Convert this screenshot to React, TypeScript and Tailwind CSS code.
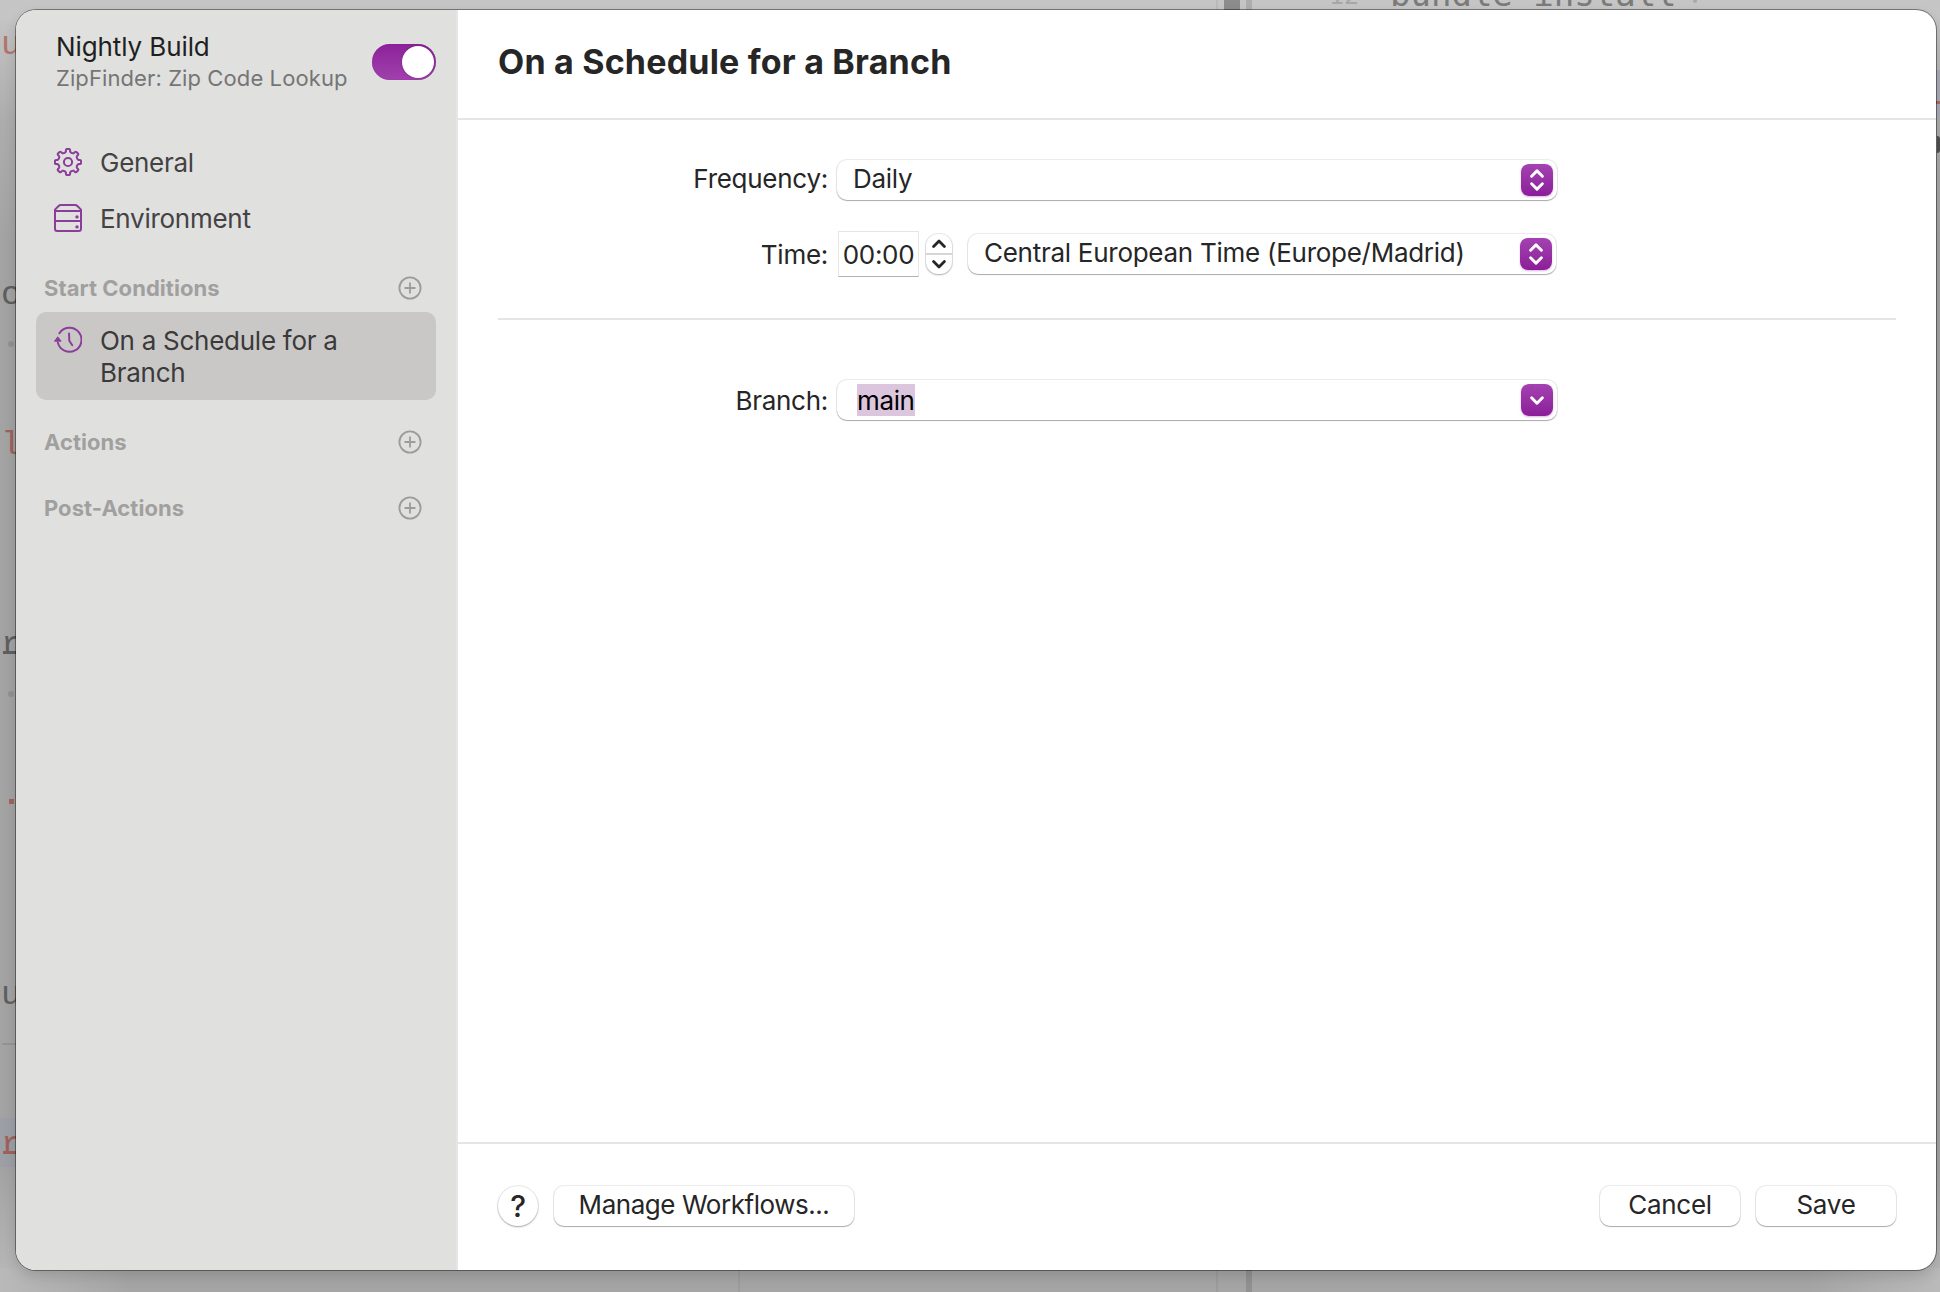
import type { ReactNode } from "react";

function gearPath() {
  const pt = (r: number, deg: number) => {
    const a = ((deg - 90) * Math.PI) / 180;
    return `${(14 + r * Math.cos(a)).toFixed(2)} ${(14 + r * Math.sin(a)).toFixed(2)}`;
  };
  let d = "";
  for (let i = 0; i < 8; i++) {
    const c = i * 45;
    d += `${i === 0 ? "M" : "L"}${pt(10.6, c - 11.5)} L${pt(12.2, c - 10)} Q${pt(13.1, c - 9)} ${pt(13.1, c - 5)} L${pt(13.1, c + 5)} Q${pt(13.1, c + 9)} ${pt(12.2, c + 10)} L${pt(10.6, c + 11.5)} Q${pt(9, c + 22.5)} ${pt(10.6, c + 33.5)} `;
  }
  return d + "Z";
}

const GEAR = gearPath();

function GearIcon() {
  return (
    <svg viewBox="0 0 28 28" className="size-7" fill="none" stroke="#8b3d9a" strokeWidth="2" strokeLinejoin="round">
      <path d={GEAR} />
      <circle cx="14" cy="14" r="4.1" />
    </svg>
  );
}

function ServerIcon() {
  return (
    <svg viewBox="0 0 28 28" className="size-7" fill="none" stroke="#8b3d9a" strokeWidth="2" strokeLinejoin="round">
      <path d="M1 7V24.8Q1 27 3.2 27H24.8Q27 27 27 24.8V7L27 5.6L23.4 2Q22.4 1 21 1H7Q5.6 1 4.6 2L1 5.6Z" />
      <path d="M1 7H27M1 17H27" />
      <circle cx="23" cy="12.9" r="1.7" fill="#8b3d9a" stroke="none" />
      <circle cx="23" cy="22.9" r="1.7" fill="#8b3d9a" stroke="none" />
    </svg>
  );
}

function HistoryIcon() {
  return (
    <svg viewBox="0 0 28 28" className="size-7" fill="none" stroke="#8b3d9a" strokeWidth="2" strokeLinecap="round" strokeLinejoin="round">
      <path d="M3.8 16.4A12 12 0 1 0 5.4 7.3" />
      <path d="M15 7.6L15.3 14.8L18.3 19.2" />
      <path d="M0.9 15.1H6.7L3.8 11.4Z" fill="#8b3d9a" strokeWidth="1.5" />
    </svg>
  );
}

function PlusCircle() {
  return (
    <svg viewBox="0 0 24 24" className="size-6" fill="none" stroke="#9c9c9b" strokeWidth="1.8" strokeLinecap="round">
      <circle cx="12" cy="12" r="10.6" />
      <path d="M12 7.2V16.8M7.2 12H16.8" />
    </svg>
  );
}

function Knob({ single = false }: { single?: boolean }) {
  return (
    <div className="size-8 shrink-0 rounded-lg bg-linear-to-b from-[#a342b0] to-[#8c1d99] shadow-[0_1px_2px_rgba(150,40,165,0.35)]">
      <svg viewBox="0 0 32 32" className="size-8" fill="none" stroke="#fff" strokeWidth="2.9" strokeLinecap="round" strokeLinejoin="round">
        {single ? (
          <path d="M10.6 13.7L16 19.3L21.4 13.7" />
        ) : (
          <path d="M10.6 12.3L16 6.9L21.4 12.3M10.6 19.7L16 25.1L21.4 19.7" />
        )}
      </svg>
    </div>
  );
}

function Popup({ children, className }: { children: ReactNode; className: string }) {
  return (
    <div className={`flex h-10 items-center justify-between rounded-[10px] bg-white pr-1 pl-4 shadow-[0_0_0_1px_rgba(0,0,0,0.08),0_1px_1px_rgba(0,0,0,0.28)] ${className}`}>
      {children}
    </div>
  );
}

function Button({ children, className }: { children: ReactNode; className: string }) {
  return (
    <button className={`flex h-10 items-center justify-center rounded-[10px] bg-white pb-0.5 shadow-[0_0_0_1px_rgba(0,0,0,0.08),0_1px_1px_rgba(0,0,0,0.28)] ${className}`}>
      {children}
    </button>
  );
}

function Section({ title, className }: { title: string; className: string }) {
  return (
    <div className={`flex h-7 items-center justify-between pr-[14px] pl-2 ${className}`}>
      <span className="text-[22px] leading-7 font-bold tracking-[0.05px] text-[#a0a09f]">{title}</span>
      <PlusCircle />
    </div>
  );
}

function NavItem({ icon, label }: { icon: ReactNode; label: string }) {
  return (
    <div className="flex h-14 items-center gap-[18px] pl-[18px] text-[#434343]">
      <div className="-mt-0.5">{icon}</div>
      <span>{label}</span>
    </div>
  );
}

function Label({ children, className = "" }: { children: ReactNode; className?: string }) {
  return <div className={`mr-[9px] w-[370px] shrink-0 text-right ${className}`}>{children}</div>;
}

/* Editor window that shows around the edges of the sheet. */
function Backdrop() {
  return (
    <div className="absolute inset-0 overflow-hidden bg-[#c5c5c5] font-['Liberation_Mono',monospace] text-[34px] leading-[34px] tracking-normal">
      <div className="absolute inset-x-0 top-0 h-full bg-[linear-gradient(to_bottom,#c8c8c8_0px,#bfbfbf_40px,#adadad_120px,#a3a3a3_240px,#a3a3a3_1170px,#b2b2b2_1250px,#bababa_1292px)]" />
      <div className="absolute inset-x-0 top-0 h-5 bg-[#c5c5c5]" />
      <div className="absolute inset-x-0 bottom-0 h-6 bg-[linear-gradient(to_right,#b9b9b9_0px,#a5a5a5_130px,#a5a5a5_1810px,#bababa_1940px)]" />
      <div className="absolute top-0 left-[1216px] h-full w-0.5 bg-black/5" />
      <div className="absolute top-0 left-[1224px] h-5 w-4 bg-[#8c8c8c]" />
      <div className="absolute top-0 left-[1246px] h-full w-1.5 bg-black/12" />
      <div className="absolute bottom-0 left-[738px] h-6 w-0.5 bg-black/5" />
      <div className="absolute top-[-21px] left-[1329px] font-['DejaVu_Sans_Mono',monospace] text-[25px] text-[#a6a6a6]">12</div>
      <div className="absolute top-[-23px] left-[1390px] font-['DejaVu_Sans_Mono','Liberation_Mono',monospace] whitespace-pre text-[#7a7a7a]">bundle install</div>
      <div className="absolute top-[-1px] left-[1693px] size-1 rounded-full bg-[#a8a8a8]" />
      <div className="absolute top-[28px] left-px text-[#b1756b]">u</div>
      <div className="absolute top-[278px] left-px text-[#5f5f5f]">o</div>
      <div className="absolute top-[341px] left-2 size-1.5 rounded-full bg-[#929292]" />
      <div className="absolute top-[428px] left-px text-[#9d635a]">l</div>
      <div className="absolute top-[628px] left-px text-[#5f5f5f]">r</div>
      <div className="absolute top-[651px] left-[3px] h-[3px] w-4 bg-[#5f5f5f]" />
      <div className="absolute top-[691px] left-2 size-1.5 rounded-full bg-[#929292]" />
      <div className="absolute top-[799px] left-[9px] h-[5px] w-[5px] bg-[#a0645a]" />
      <div className="absolute top-[978px] left-px text-[#5f5f5f]">u</div>
      <div className="absolute top-[1043px] left-0.5 h-0.5 w-4 bg-[#949494]" />
      <div className="absolute top-[1118px] left-0 h-[49px] w-5 bg-[#9d9fa6]" />
      <div className="absolute top-[1128px] left-px text-[#9d635a]">r</div>
      <div className="absolute top-[1151px] left-[3px] h-[3px] w-4 bg-[#9d635a]" />
      <div className="absolute top-[70px] right-0 h-12 w-1 bg-[#a9abb5]" />
      <div className="absolute top-[101px] right-0 h-[3px] w-1 bg-[#a86d64]" />
      <div className="absolute top-[136px] right-0 h-[17px] w-[3px] rounded-r-full bg-[#4f4f4f]" />
    </div>
  );
}

export default function App() {
  return (
    <div className="relative h-[1292px] w-[1940px] overflow-hidden pt-[10px] pl-4 font-['Inter',sans-serif] text-[26px] leading-8 tracking-[-0.27px] text-[#262626]">
      <Backdrop />
      <div className="relative flex h-[1260px] w-[1920px] overflow-hidden rounded-[20px] bg-white shadow-[0_0_0_1px_rgba(0,0,0,0.4),0_6px_14px_rgba(0,0,0,0.14)]">
        <aside className="w-[442px] shrink-0 border-r-2 border-[#e6e6e6] bg-[#e0e0df] px-5 pt-[21px]">
          <div className="flex h-[61px] justify-between pl-5">
            <div>
              <div className="tracking-[-0.1px] text-[#1f1f1f]">Nightly Build</div>
              <div className="mt-px text-[22px] leading-7 tracking-[0.1px] whitespace-nowrap text-[#757575]">ZipFinder: Zip Code Lookup</div>
            </div>
            <div className="mt-[13px] flex h-9 w-16 shrink-0 items-center justify-end rounded-full bg-linear-to-b from-[#8c2199] to-[#a140ad] pr-0.5 shadow-[inset_0_0_1px_rgba(90,10,100,0.6)]">
              <div className="size-8 rounded-full bg-white shadow-[0_0_2px_rgba(0,0,0,0.35)]" />
            </div>
          </div>
          <nav className="mt-[43px]">
            <NavItem icon={<GearIcon />} label="General" />
            <NavItem icon={<ServerIcon />} label="Environment" />
          </nav>
          <Section title="Start Conditions" className="mt-[27px]" />
          <div className="mt-[10px] flex h-[88px] gap-[18px] rounded-[10px] bg-[#cac8c7] pt-[13px] pl-[18px] text-[#3a3a3a]">
            <div className="mt-px">
              <HistoryIcon />
            </div>
            <div>
              On a Schedule for a
              <br />
              Branch
            </div>
          </div>
          <Section title="Actions" className="mt-7" />
          <Section title="Post-Actions" className="mt-[38px]" />
        </aside>

        <main className="flex flex-1 flex-col">
          <header className="h-[110px] shrink-0 border-b-2 border-[#e5e5e5] pt-[32px] pl-10">
            <h1 className="text-[34px] leading-10 font-bold tracking-[0.2px]">On a Schedule for a Branch</h1>
          </header>

          <section className="flex-1 pt-10">
            <div className="flex h-10 items-center">
              <Label className="pb-0.5">Frequency:</Label>
              <Popup className="w-[720px]">
                <span className="pb-0.5">Daily</span>
                <Knob />
              </Popup>
            </div>
            <div className="mt-8 flex h-11 items-center">
              <Label className="pt-0.5">Time:</Label>
              <div className="ml-px flex h-[46px] w-[81px] items-center justify-center border border-[#e6e6e6] border-b-[#b3b3b3] pt-0.5">00:00</div>
              <div className="ml-[7px] h-10 w-[26px] rounded-[12px] bg-white shadow-[0_0_0_1px_rgba(0,0,0,0.08),0_1px_2px_rgba(0,0,0,0.26)]">
                <svg viewBox="0 0 26 40" className="h-10 w-[26px]" fill="none" stroke="#262626" strokeWidth="2.8" strokeLinecap="round" strokeLinejoin="round">
                  <path d="M0 20H26" stroke="#d6d6d6" strokeWidth="2" strokeLinecap="butt" />
                  <path d="M7.6 12.4L13 7L18.4 12.4M7.6 27.6L13 33L18.4 27.6" />
                </svg>
              </div>
              <Popup className="ml-4 w-[588px]">
                <span className="pb-0.5">Central European Time (Europe/Madrid)</span>
                <Knob />
              </Popup>
            </div>
            <div className="mx-10 mt-[42px] h-0.5 bg-[#e5e5e5]" />
            <div className="mt-[60px] flex h-10 items-center">
              <Label className="pt-0.5">Branch:</Label>
              <Popup className="w-[720px]">
                <span className="ml-1 h-8 w-[58px] bg-[#dcc6de] tracking-[-0.35px] text-black">
                  <span className="relative top-px">main</span>
                </span>
                <div className="ml-auto">
                  <Knob single />
                </div>
              </Popup>
            </div>
          </section>

          <footer className="flex h-[128px] shrink-0 items-start gap-4 border-t-2 border-[#e5e5e5] px-10 pt-[42px]">
            <button className="flex size-10 items-center justify-center rounded-full bg-white text-[30px] font-medium shadow-[0_0_0_1px_rgba(0,0,0,0.07),0_1px_2px_rgba(0,0,0,0.3)]">?</button>
            <Button className="w-[300px] tracking-[-0.45px]">Manage Workflows...</Button>
            <Button className="ml-auto w-[140px]">Cancel</Button>
            <Button className="w-[140px]">Save</Button>
          </footer>
        </main>
      </div>
    </div>
  );
}
